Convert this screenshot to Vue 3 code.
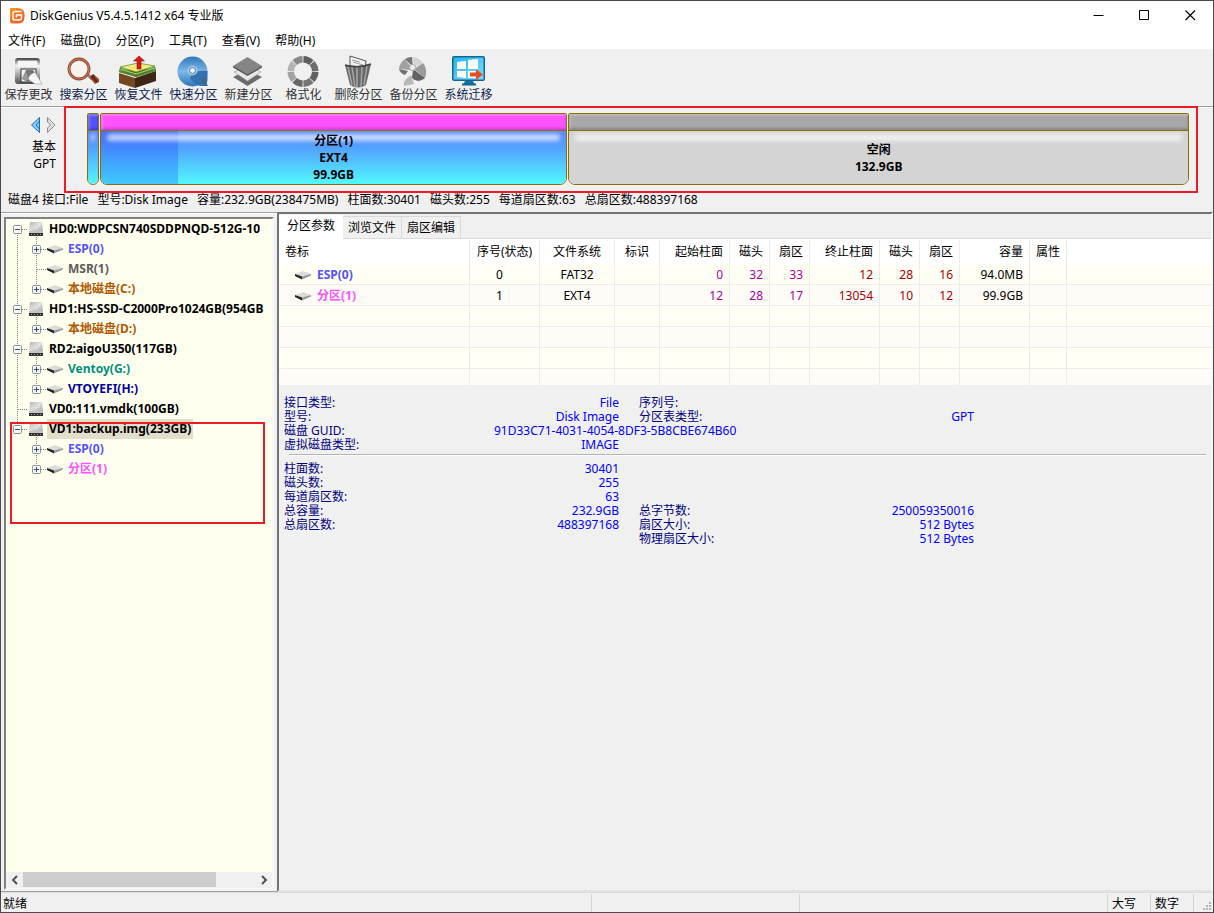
<script setup>
import { ref } from 'vue'

const menus = ['文件(F)', '磁盘(D)', '分区(P)', '工具(T)', '查看(V)', '帮助(H)']

const tools = [
  { id: 'save', label: '保存更改' },
  { id: 'search', label: '搜索分区', navy: true },
  { id: 'recover', label: '恢复文件', navy: true },
  { id: 'quick', label: '快速分区', navy: true },
  { id: 'create', label: '新建分区' },
  { id: 'format', label: '格式化' },
  { id: 'delete', label: '删除分区' },
  { id: 'backup', label: '备份分区' },
  { id: 'migrate', label: '系统迁移', navy: true }
]

const summary = [
  '磁盘4 接口:File',
  '型号:Disk Image',
  '容量:232.9GB(238475MB)',
  '柱面数:30401',
  '磁头数:255',
  '每道扇区数:63',
  '总扇区数:488397168'
]

const tree = [
  {
    name: 'HD0:WDPCSN740SDDPNQD-512G-10',
    children: [
      { name: 'ESP(0)', color: 'blue', box: true },
      { name: 'MSR(1)', color: 'gray' },
      { name: '本地磁盘(C:)', color: 'brown', box: true }
    ]
  },
  { name: 'HD1:HS-SSD-C2000Pro1024GB(954GB', children: [{ name: '本地磁盘(D:)', color: 'brown', box: true }] },
  {
    name: 'RD2:aigoU350(117GB)',
    children: [
      { name: 'Ventoy(G:)', color: 'teal', box: true },
      { name: 'VTOYEFI(H:)', color: 'navy', box: true }
    ]
  },
  { name: 'VD0:111.vmdk(100GB)', children: [] },
  {
    name: 'VD1:backup.img(233GB)',
    selected: true,
    children: [
      { name: 'ESP(0)', color: 'blue', box: true },
      { name: '分区(1)', color: 'pink', box: true }
    ]
  }
]

const tabs = ['分区参数', '浏览文件', '扇区编辑']
const activeTab = ref(0)

const columns = [
  { t: '卷标', c: 'w190 left' },
  { t: '序号(状态)', c: 'w70 center' },
  { t: '文件系统', c: 'w75 center' },
  { t: '标识', c: 'w45 center' },
  { t: '起始柱面', c: 'w70' },
  { t: '磁头', c: 'w40' },
  { t: '扇区', c: 'w40' },
  { t: '终止柱面', c: 'w70' },
  { t: '磁头', c: 'w40' },
  { t: '扇区', c: 'w40' },
  { t: '容量', c: 'w70' },
  { t: '属性', c: 'w37 center' }
]

const partitions = [
  { name: 'ESP(0)', color: 'blue', cells: ['0', 'FAT32', '', '0', '32', '33', '12', '28', '16', '94.0MB', ''] },
  { name: '分区(1)', color: 'pink', cells: ['1', 'EXT4', '', '12', '28', '17', '13054', '10', '12', '99.9GB', ''] }
]

function cellClass(i) {
  if (i === 0) return 'center number'
  if (i < 3) return 'center'
  if (i < 6) return 'start'
  if (i < 9) return 'end'
  return ''
}

const infoTop = [
  ['接口类型:', 'File', '序列号:', ''],
  ['型号:', 'Disk Image', '分区表类型:', 'GPT'],
  ['磁盘 GUID:', '91D33C71-4031-4054-8DF3-5B8CBE674B60', '', ''],
  ['虚拟磁盘类型:', 'IMAGE', '', '']
]
const infoBottom = [
  ['柱面数:', '30401', '', ''],
  ['磁头数:', '255', '', ''],
  ['每道扇区数:', '63', '', ''],
  ['总容量:', '232.9GB', '总字节数:', '250059350016'],
  ['总扇区数:', '488397168', '扇区大小:', '512 Bytes'],
  ['', '', '物理扇区大小:', '512 Bytes']
]
const infoBlocks = [infoTop, infoBottom]

function wedge(i, inner, outer, cx, cy, sweep, pad) {
  const a = ((i * sweep + pad) * Math.PI) / 180
  const b = (((i + 1) * sweep - pad) * Math.PI) / 180
  const p = (r, t) => `${(cx + r * Math.sin(t)).toFixed(2)} ${(cy - r * Math.cos(t)).toFixed(2)}`
  return `M${p(inner, a)}L${p(outer, a)}A${outer} ${outer} 0 0 1 ${p(outer, b)}L${p(inner, b)}A${inner} ${inner} 0 0 0 ${p(inner, a)}Z`
}
const ring = ['#5f5f5f', '#6d6d6d', '#616161', '#757575', '#686868', '#a2a2a2', '#b3b3b3', '#8a8a8a'].map((fill, i) => ({
  fill,
  d: wedge(i, 9, 15.5, 15, 15.5, 45, 2)
}))
</script>

<template>
  <div class="window">
    <svg width="0" height="0" class="defs" aria-hidden="true">
      <defs>
        <linearGradient id="gDisk" x1="0" y1="0" x2="1" y2="1">
          <stop offset="0" stop-color="#b4b4b4" /><stop offset=".45" stop-color="#dedede" /><stop offset="1" stop-color="#a8a8a8" />
        </linearGradient>
        <linearGradient id="gSave" x1="0" y1="0" x2="0" y2="1">
          <stop offset="0" stop-color="#4a4a4a" /><stop offset=".3" stop-color="#f2f2f2" /><stop offset="1" stop-color="#555" />
        </linearGradient>
        <linearGradient id="gBlue" x1="0" y1="0" x2="0" y2="1">
          <stop offset="0" stop-color="#2f78bd" /><stop offset=".5" stop-color="#7db8e6" /><stop offset="1" stop-color="#2f74b8" />
        </linearGradient>
        <linearGradient id="gLogo" x1="0" y1="0" x2="1" y2="1">
          <stop offset="0" stop-color="#fb9a1c" /><stop offset="1" stop-color="#e8502a" />
        </linearGradient>
        <linearGradient id="gSky" x1="0" y1="0" x2="1" y2="1">
          <stop offset="0" stop-color="#22b7ee" /><stop offset="1" stop-color="#7fdcff" />
        </linearGradient>
      </defs>
    </svg>

    <header class="titlebar">
      <svg class="logo" width="15" height="16" viewBox="0 0 15 16" aria-hidden="true">
        <path d="M0 0H8Q14.500 0 14.500 7V9Q14.500 15.500 8 15.500H2Q0 15.500 0 13Z" fill="url(#gLogo)" />
        <path d="M11.500 3.500H5Q3 3.500 3 5.500V10Q3 12 5 12H9.500Q11.500 12 11.500 10V7H6.500V9.500" fill="none" stroke="#fff" stroke-width="1.400" />
      </svg>
      <h1>DiskGenius V5.4.5.1412 x64 专业版</h1>
      <div class="winctl">
        <button aria-label="最小化"><svg width="11" height="11"><path d="M0.500 5.500H10.500" stroke="#000" /></svg></button>
        <button aria-label="最大化"><svg width="11" height="11"><path d="M.5.5H9.500V9.500H.5Z" fill="none" stroke="#000" /></svg></button>
        <button aria-label="关闭"><svg width="11" height="11"><path d="M.5.5L10 10M10 .5L.5 10" stroke="#000" stroke-width="1.200" /></svg></button>
      </div>
    </header>

    <nav class="menubar">
      <button v-for="m in menus" :key="m">{{ m }}</button>
    </nav>

    <div class="toolbar">
      <button v-for="t in tools" :key="t.id" :class="{ navy: t.navy }">
        <svg width="32" height="32" viewBox="0 0 32 32" aria-hidden="true">
          <template v-if="t.id === 'save'">
            <rect x="2" y="2" width="25" height="26" rx="3" fill="url(#gSave)" />
            <path d="M5 4H24L25 11H4Z" fill="#f4f4f4" />
            <path d="M4 3.500H25" stroke="#555" stroke-width="2" />
            <rect x="8" y="13" width="15" height="13" fill="#f4f4f4" stroke="#333" />
            <path d="M9 23L13 14L20 14L23 18L16 26Z" fill="#777" />
            <path d="M9 22L13 16L16 23L12 25Z" fill="#999" />
            <path d="M17 19L22 16L29 28H22L15 23Z" fill="#f6f6f6" stroke="#888" stroke-width=".5" />
          </template>
          <template v-else-if="t.id === 'search'">
            <path d="M19 18L24 23" stroke="#8d8d8d" stroke-width="3" />
            <path d="M21 21L25 18L31 23V26L27 28Z" fill="#9d4425" />
            <path d="M24 20L29 26M26 19L24 23" stroke="#5d2917" stroke-width="2" />
            <circle cx="11" cy="13" r="10" fill="#f5f2ef" stroke="#82412d" stroke-width="2.800" />
            <circle cx="11" cy="13" r="10" fill="none" stroke="#d67550" stroke-width="1.200" />
          </template>
          <template v-else-if="t.id === 'recover'">
            <path d="M-4 17L12 22V32L-4 27Z" fill="#714724" />
            <path d="M12 22L33 15V25L12 32Z" fill="#3d2616" />
            <path d="M-4 16L13 21L33 15L15 12Z" fill="#8c5a2c" />
            <path d="M-4 14L13 20L33 13V15L13 21L-4 16Z" fill="#4c8d35" />
            <path d="M-3 12L13 17L32 11V13L13 19L-3 14Z" fill="#a7d85b" stroke="#276d27" stroke-width=".7" />
            <path d="M-3 11L15 7L32 10L13 16Z" fill="#f5e978" stroke="#55882c" stroke-width=".7" />
            <path d="M14 13V5H10.500L16 0L21.500 5H18V13Z" fill="#d91919" stroke="#8b1b16" stroke-width=".6" />
          </template>
          <template v-else-if="t.id === 'quick'">
            <circle cx="14.500" cy="15.500" r="15" fill="url(#gBlue)" />
            <path d="M14 18Q18 14 29.500 15V24Q28 29 30 30H22Q15 27 12 22Z" fill="#3272b0" />
            <path d="M22 22Q23 29 30 30Q27 26 28 22Z" fill="#3f6793" />
            <circle cx="14.500" cy="14.500" r="5" fill="#a5cbe9" />
            <circle cx="14.500" cy="14.500" r="3" fill="#f0f2f4" stroke="#3778b2" />
          </template>
          <template v-else-if="t.id === 'create'">
            <path d="M0 21L14.500 30L29 21L14.500 14Z" fill="#6b6b6b" />
            <path d="M1 16L14.500 25L28 16L14.500 9Z" fill="#e8e8e8" stroke="#999" stroke-width=".7" />
            <path d="M0 10V11.500L14.500 20L29 11.500V10Z" fill="#555" />
            <path d="M0 10L14.500 1L29 10L14.500 18.500Z" fill="#858585" />
          </template>
          <template v-else-if="t.id === 'format'">
            <path v-for="(w, i) in ring" :key="i" :d="w.d" :fill="w.fill" />
          </template>
          <template v-else-if="t.id === 'delete'">
            <path d="M7 11V0L23 5L22 12Z" fill="#f3f3f3" stroke="#555" />
            <path d="M9 4L17 6M10 6L20 9" stroke="#999" />
            <path d="M2 9L16 10L28 8L23 29Q15 34 7 29Z" fill="#686868" />
            <path d="M5 11L9 29M9 11L12 31M14 11V31M19 11L18 31M24 10L21 29" stroke="#a5a5a5" stroke-width="1.500" />
            <path d="M2 9Q15 13 28 8" fill="none" stroke="#444" stroke-width="1.500" />
          </template>
          <template v-else-if="t.id === 'backup'">
            <path d="M1 13A13 13 0 0 1 7 3L13 11L12 14Z" fill="#a2a2a2" />
            <path d="M7 3A12 12 0 0 1 14 1L15 11Z" fill="#767676" />
            <path d="M15 1A14 14 0 0 1 25 7L16 11Z" fill="#d4d4d4" />
            <path d="M25 7Q30 13 27 22L16 13Z" fill="#9b9b9b" />
            <path d="M27 22Q20 28 14 22L15 13Z" fill="#626262" />
            <path d="M13 19L16 28L6 30Q4 25 13 19Z" fill="#b8b8b8" />
            <path d="M1 13L10 15L7 19Q2 17 1 13Z" fill="#707070" />
            <circle cx="14.500" cy="11.500" r="3" fill="#eee" stroke="#aaa" />
          </template>
          <template v-else>
            <path d="M12 25H20L22 29H10Z" fill="#16749f" />
            <path d="M9 28.500H23" stroke="#14658f" stroke-width="2" />
            <rect x="-1" y="0" width="33" height="25" rx="2" fill="#14658f" />
            <rect x="0.500" y="1.500" width="30" height="22" fill="url(#gSky)" />
            <path d="M4 6L13 5V13H4ZM15 4L25 3V13H15ZM4 15H13V22L4 21ZM15 15H25V22L15 22Z" fill="#fff" />
            <path d="M17 16.500H23V13L30 18.500L23 24V20.500H17Z" fill="#e94e22" />
          </template>
        </svg>
        <span>{{ t.label }}</span>
      </button>
    </div>

    <section class="diskbar">
      <div class="maprow">
        <div class="nav">
          <div class="arrows">
            <button aria-label="上一个磁盘"><svg width="10" height="16"><path d="M8.500 .5V15.500L.5 8Z" fill="#83cdf8" stroke="#1769b5" /><path d="M8.500 4L5 8L8.500 12" fill="none" stroke="#1769b5" /></svg></button>
            <button aria-label="下一个磁盘"><svg width="10" height="16"><path d="M1.500 .5V5L4.500 8L1.500 11V15.500L9 8Z" fill="#dedede" stroke="#8e8e8e" /></svg></button>
          </div>
          <span>基本</span>
          <span>GPT</span>
        </div>
        <div class="map">
          <div class="seg esp"><div class="cap"></div><div class="body"><i class="shine"></i></div></div>
          <div class="seg ext"><div class="cap"></div><div class="body"><i class="used"></i><i class="shine"></i>
            <b>分区(1)</b><b>EXT4</b><b>99.9GB</b></div></div>
          <div class="seg free"><div class="cap"></div><div class="body"><i class="shine"></i><b>空闲</b><b>132.9GB</b></div></div>
          <div class="mark map-mark"></div>
        </div>
      </div>
      <p class="summary"><span v-for="s in summary" :key="s">{{ s }}</span></p>
    </section>

    <main>
      <aside>
        <div class="treebox">
          <ul class="tree">
            <li v-for="(d, di) in tree" :key="d.name">
              <div class="row">
                <component :is="d.children.length ? 'button' : 'span'" class="guide" :aria-label="d.children.length ? '折叠 ' + d.name : null">
                  <svg width="19" height="20" aria-hidden="true">
                    <path v-if="di > 0" class="dots" d="M9.500 0V10" />
                    <path v-if="di < tree.length - 1" class="dots" d="M9.500 10V20" />
                    <path class="dots" d="M10 10.500H19" />
                    <template v-if="d.children.length"><rect class="box" x="5.500" y="6.500" width="8" height="8" rx="1" /><path class="sign" d="M7 10.500H12" /></template>
                  </svg>
                </component>
                <svg class="icon" width="20" height="20" aria-hidden="true">
                  <path v-if="d.children.length" class="dots" d="M9.500 16V20" />
                  <path d="M3 3H15L16 13H2Z" fill="url(#gDisk)" />
                  <path d="M8 9Q13 9 13 4" stroke="#eee" fill="none" />
                  <path d="M2 12H16V17H2Z" fill="#c4c4c4" />
                  <path d="M2 14H16V17H2Z" fill="#333" />
                  <path d="M4 15.500H5M7 15.500H8M10 15.500H11M13 15.500H14" stroke="#999" />
                </svg>
                <span class="name" :class="{ selected: d.selected }">{{ d.name }}</span>
              </div>
              <ul v-if="d.children.length">
                <li v-for="(p, pi) in d.children" :key="p.name" class="row">
                  <svg width="19" height="20" aria-hidden="true"><path v-if="di < tree.length - 1" class="dots" d="M9.500 0V20" /></svg>
                  <component :is="p.box ? 'button' : 'span'" class="guide" :aria-label="p.box ? '展开 ' + p.name : null">
                    <svg width="19" height="20" aria-hidden="true">
                      <path class="dots" d="M9.500 0V10" />
                      <path v-if="pi < d.children.length - 1" class="dots" d="M9.500 10V20" />
                      <path class="dots" d="M10 10.500H19" />
                      <template v-if="p.box"><rect class="box" x="5.500" y="6.500" width="8" height="8" rx="1" /><path class="sign" d="M7 10.500H12M9.500 8V13" /></template>
                    </svg>
                  </component>
                  <svg class="icon" width="20" height="20" aria-hidden="true">
                    <path d="M1 9L9 6L17 9L8 12Z" fill="#dcdcdc" /><path d="M1 9L8 11.500V14.500L1 11Z" fill="#222" /><path d="M8 11.500L17 9V10.500L8 14.500Z" fill="#9a9a9a" />
                  </svg>
                  <span class="name" :class="p.color">{{ p.name }}</span>
                </li>
              </ul>
            </li>
          </ul>
          <div class="hscroll">
            <button aria-label="向左滚动"><svg width="8" height="10"><path d="M6 1L2 5L6 9" /></svg></button>
            <div class="track"><div class="thumb"></div></div>
            <button aria-label="向右滚动"><svg width="8" height="10"><path d="M2 1L6 5L2 9" /></svg></button>
          </div>
          <div class="mark tree-mark"></div>
        </div>
      </aside>

      <section class="detail">
        <div class="tabs" role="tablist">
          <button v-for="(t, i) in tabs" :key="t" role="tab" :aria-selected="i === activeTab" :class="{ active: i === activeTab }" @click="activeTab = i">{{ t }}</button>
        </div>
        <table>
          <thead>
            <tr><th v-for="(c, i) in columns" :key="i" :class="c.c">{{ c.t }}</th><th class="rest"></th></tr>
          </thead>
          <tbody>
            <tr v-for="p in partitions" :key="p.name">
              <td class="label" :class="p.color">
                <svg width="20" height="12" aria-hidden="true"><path d="M1 4L9 1L17 4L8 7Z" fill="#dcdcdc" /><path d="M1 4L8 6.500V9.500L1 6Z" fill="#222" /><path d="M8 6.500L17 4V5.500L8 9.500Z" fill="#9a9a9a" /></svg>{{ p.name }}
              </td>
              <td v-for="(c, i) in p.cells" :key="i" :class="cellClass(i)">{{ c }}</td>
              <td class="rest"></td>
            </tr>
            <tr v-for="n in 4" :key="n" :class="{ last: n === 4 }">
              <td v-for="k in 12" :key="k"></td>
              <td class="rest"></td>
            </tr>
          </tbody>
        </table>
        <div class="info">
          <template v-for="(block, bi) in infoBlocks" :key="bi">
            <hr v-if="bi" />
            <div class="block">
              <div v-for="(r, ri) in block" :key="ri" class="line">
                <div class="pair"><span>{{ r[0] }}</span><span class="val" :class="{ long: r[1].length > 30 }">{{ r[1] }}</span></div>
                <div class="pair"><span>{{ r[2] }}</span><span class="val">{{ r[3] }}</span></div>
              </div>
            </div>
          </template>
        </div>
      </section>
    </main>

    <footer>
      <span class="ready">就绪</span>
      <span class="pane"></span>
      <span class="pane wide"></span>
      <span class="pane key">大写</span>
      <span class="pane key">数字</span>
      <span class="pane grip"><svg width="10" height="10" aria-hidden="true"><path d="M6 0h2v2h-2zM3 3h2v2h-2zM6 3h2v2h-2zM0 6h2v2h-2zM3 6h2v2h-2zM6 6h2v2h-2z" fill="#b4b4b4" /></svg></span>
    </footer>
  </div>
</template>

<style>
body {
  margin: 0;
  background: #f0f0f0;
}
</style>

<style scoped>
* {
  box-sizing: border-box;
}
.window {
  display: flex;
  flex-direction: column;
  height: 100vh;
  overflow: hidden;
  border: 1px solid #4a4a50;
  background: #f0f0f0;
  color: #000;
  font: 12px/16px "Noto Sans", "Noto Sans CJK SC", sans-serif;
  white-space: nowrap;
}
.defs {
  position: absolute;
}
button {
  padding: 0;
  border: 0;
  background: none;
  color: inherit;
  font: inherit;
}
svg {
  display: block;
  flex: none;
  overflow: visible;
}
.titlebar {
  display: flex;
  align-items: center;
  height: 29px;
  padding-left: 9px;
  background: #fff;
}
h1 {
  flex: 1;
  margin: 0 0 0 5px;
  font-size: 12px;
  font-weight: 400;
}
.winctl {
  display: flex;
}
.winctl button {
  display: grid;
  place-items: center;
  width: 46px;
  height: 28px;
}
.menubar {
  display: flex;
  gap: 15px;
  height: 19px;
  padding-left: 7px;
  background: #fff;
}
.menubar button {
  height: 22px;
}
.toolbar {
  display: flex;
  height: 58px;
  padding-top: 7px;
  border-bottom: 1px solid #a0a0a0;
}
.toolbar button {
  display: flex;
  flex-direction: column;
  align-items: center;
  width: 55px;
  color: #333;
  line-height: 14px;
}
.toolbar button.navy {
  color: #0c1c4c;
}
.diskbar {
  border-top: 1px solid #fff;
}
.maprow {
  display: flex;
  height: 84px;
}
.nav {
  display: flex;
  flex-direction: column;
  align-items: flex-end;
  width: 63px;
  padding: 9px 8px 0 0;
  line-height: 17px;
}
.arrows {
  display: flex;
  align-items: flex-start;
  gap: 5px;
  height: 21px;
}
.map {
  position: relative;
  display: flex;
  flex: 1;
  gap: 1px;
  padding: 5px 24px 7px 23px;
}
.seg {
  display: flex;
  flex-direction: column;
  overflow: hidden;
  border: 1px solid #8c7000;
  border-radius: 2px 2px 7px 7px;
}
.cap {
  height: 17px;
  border-bottom: 1px solid #8c7000;
  box-shadow: inset 0 -2px 3px rgba(0, 0, 0, 0.2), inset 2px 2px 2px rgba(255, 255, 255, 0.25);
}
.body {
  position: relative;
  display: flex;
  flex: 1;
  flex-direction: column;
  align-items: center;
  justify-content: center;
  line-height: 17px;
  background: linear-gradient(#6088ff, #52a0ff 30%, #52f8ff);
}
.body b {
  position: relative;
}
.shine {
  position: absolute;
  top: 3px;
  left: 6px;
  right: 6px;
  height: 7px;
  border-radius: 3px;
  background: rgba(255, 255, 255, 0.65);
  filter: blur(2px);
}
.esp .shine {
  left: 3px;
  right: 3px;
}
.used {
  position: absolute;
  top: 0;
  bottom: 0;
  left: 0;
  width: 77px;
  background: linear-gradient(rgba(55, 80, 255, 0.5), rgba(50, 170, 255, 0.6));
}
.esp {
  width: 12px;
}
.esp .cap {
  background: #5252ff;
}
.ext {
  flex: 467;
}
.ext .cap {
  background: #ff52ff;
}
.free {
  flex: 621;
}
.free .cap {
  background: #a8a8a8;
}
.free .body {
  background: #d4d4d4;
}
.mark {
  position: absolute;
  border: 2px solid #ed1c24;
  pointer-events: none;
}
.map-mark {
  top: -2px;
  right: 15px;
  bottom: -1px;
  left: 0;
}
.summary {
  display: flex;
  gap: 9px;
  height: 20px;
  margin: 0;
  padding-left: 7px;
}
main {
  display: flex;
  flex: 1;
  min-height: 0;
}
aside {
  display: flex;
  width: 276px;
  padding: 3px 3px 1px;
  border-top: 1px solid #a0a0a0;
  border-bottom: 1px solid #a0a0a0;
  box-shadow: inset 0 1px #fff;
}
.treebox {
  position: relative;
  display: flex;
  flex: 1;
  flex-direction: column;
  min-width: 0;
  margin-top: 1px;
  border: 2px solid;
  border-color: #808080 #f8f8f8 #f8f8f8 #808080;
  background: #fffff0;
}
.tree {
  flex: 1;
  overflow: hidden;
  padding-left: 2px;
  font-weight: 700;
}
ul {
  margin: 0;
  padding: 0;
  list-style: none;
}
.row {
  display: flex;
  height: 20px;
  line-height: 20px;
}
.guide {
  width: 19px;
  height: 20px;
}
.dots {
  fill: none;
  stroke: #808080;
  stroke-dasharray: 1 1;
}
.box {
  fill: #f8f8f8;
  stroke: #919191;
}
.sign {
  stroke: #2f4c9c;
}
.name {
  padding: 0 2px;
}
.selected {
  background: #e2decc;
}
.blue {
  color: #5252ff;
}
.gray {
  color: #5c5c5c;
}
.brown {
  color: #b35900;
}
.teal {
  color: #009080;
}
.name.navy {
  color: #0000a0;
}
.pink {
  color: #ff52ff;
}
.hscroll {
  display: flex;
  height: 16px;
  background: #f0f0f0;
}
.hscroll button {
  display: grid;
  place-items: center;
  width: 17px;
}
.hscroll path {
  fill: none;
  stroke: #505050;
  stroke-width: 2;
}
.track {
  flex: 1;
}
.thumb {
  width: 83%;
  height: 15px;
  background: #cdcdcd;
}
.tree-mark {
  top: 203px;
  right: 7px;
  left: 4px;
  height: 102px;
}
.detail {
  flex: 1;
  min-width: 0;
  border: solid;
  border-width: 2px;
  border-color: #747474 #f8f8f8 #e3e3e3 #747474;
}
.tabs {
  display: flex;
  align-items: flex-end;
  height: 25px;
  border-bottom: 1px solid #d9d9d9;
}
.tabs button {
  height: 22px;
  padding: 0 5px;
  border: 1px solid #d9d9d9;
  border-width: 1px 1px 0 0;
}
.tabs .active {
  height: 24px;
  margin-bottom: -1px;
  padding: 0 7px 3px 8px;
  border-color: #fff;
  background: #fff;
}
table {
  width: 100%;
  border-collapse: separate;
  border-spacing: 0;
  table-layout: fixed;
  border-top: 1px solid #fff;
}
th,
td {
  height: 21px;
  padding: 0 6px 0 0;
  border-right: 1px solid #ececec;
  text-align: right;
  line-height: 16px;
}
th {
  height: 24px;
  background: #fff;
  font-weight: 400;
}
td {
  padding-top: 2px;
  border-bottom: 1px solid #ececec;
}
tbody tr {
  background: #fffff5;
}
tbody tr:nth-child(even) {
  background: #fffcf7;
}
.last td {
  height: 16px;
  border-bottom: 0;
}
.rest {
  border-right: 0;
}
.w190 {
  width: 191px;
}
.w75 {
  width: 75px;
}
.w70 {
  width: 70px;
}
.w45 {
  width: 45px;
}
.w40 {
  width: 40px;
}
.w37 {
  width: 37px;
}
.left {
  padding-left: 6px;
  text-align: left;
}
.center {
  padding-right: 0;
  text-align: center;
}
.number {
  padding-right: 10px;
}
.label {
  padding-left: 15px;
  text-align: left;
  font-weight: 700;
}
.label svg {
  display: inline-block;
  margin-right: 3px;
  vertical-align: middle;
}
.start {
  color: #a800a8;
}
.end {
  color: #a80000;
}
.info {
  padding: 11px 5px;
  color: #000080;
  line-height: 14px;
}
.line {
  display: grid;
  grid-template-columns: 335px 335px;
  gap: 20px;
  height: 14px;
}
.pair {
  display: grid;
  grid-template-columns: 210px 125px;
}
.val {
  color: #0000ff;
  text-align: right;
}
.long {
  text-align: left;
}
hr {
  margin: 2px 0 6px 5px;
  border: 0;
  border-top: 1px solid #b4b4b4;
  border-bottom: 1px solid #fff;
}
footer {
  display: flex;
  height: 20px;
  border-top: 1px solid #dcdcdc;
  line-height: 20px;
}
.ready {
  flex: 590;
  margin-top: 1px;
  padding-left: 2px;
}
.pane {
  flex: 208;
  margin-top: 1px;
  border-left: 1px solid #d4d4d4;
}
.wide {
  flex: 308;
}
.key {
  flex: none;
  width: 43px;
  padding-left: 4px;
}
.grip {
  display: flex;
  flex: none;
  align-items: flex-end;
  justify-content: flex-end;
  width: 20px;
}
</style>
